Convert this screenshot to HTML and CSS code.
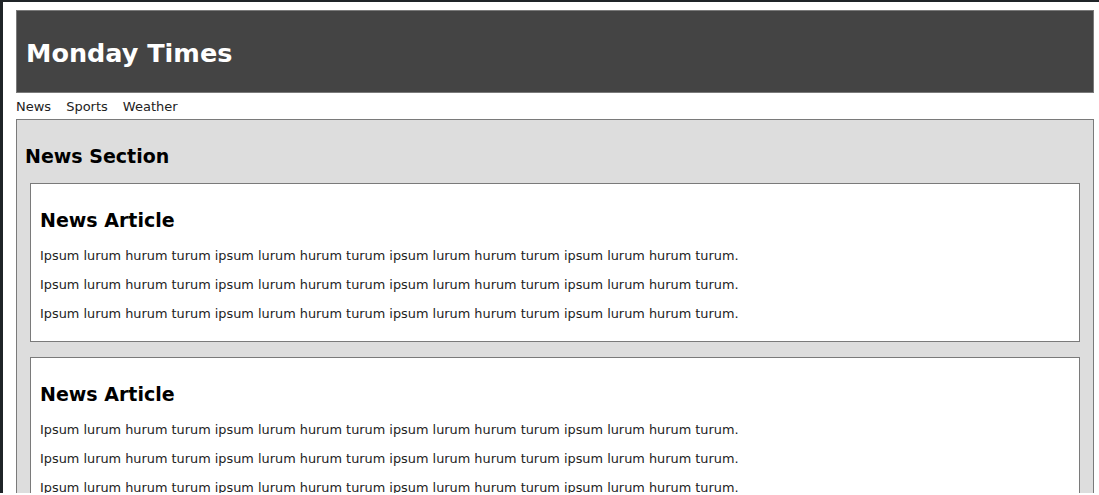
FILE: index.html
```html
<!DOCTYPE html>
<html>
<head>
<meta charset="utf-8">
<link rel="stylesheet" href="styles.css">
</head>
<body>
<div class="page">
  <header class="masthead">
    <h1 class="title">Monday Times</h1>
  </header>
  <nav class="nav">
    <a href="#">News</a>
    <a href="#">Sports</a>
    <a href="#">Weather</a>
  </nav>
  <section class="section">
    <h2 class="section-title">News Section</h2>
    <article class="article">
      <h2 class="article-title">News Article</h2>
      <p>Ipsum lurum hurum turum ipsum lurum hurum turum ipsum lurum hurum turum ipsum lurum hurum turum.</p>
      <p>Ipsum lurum hurum turum ipsum lurum hurum turum ipsum lurum hurum turum ipsum lurum hurum turum.</p>
      <p>Ipsum lurum hurum turum ipsum lurum hurum turum ipsum lurum hurum turum ipsum lurum hurum turum.</p>
    </article>
    <article class="article">
      <h2 class="article-title">News Article</h2>
      <p>Ipsum lurum hurum turum ipsum lurum hurum turum ipsum lurum hurum turum ipsum lurum hurum turum.</p>
      <p>Ipsum lurum hurum turum ipsum lurum hurum turum ipsum lurum hurum turum ipsum lurum hurum turum.</p>
      <p>Ipsum lurum hurum turum ipsum lurum hurum turum ipsum lurum hurum turum ipsum lurum hurum turum.</p>
    </article>
  </section>
</div>
</body>
</html>
```

FILE: styles.css
```css
html, body {
  margin: 0;
  padding: 0;
  background: #ffffff;
}
body {
  border-top: 2px solid #1f2428;
  border-left: 3px solid #1f2428;
  font-family: "DejaVu Sans", Verdana, sans-serif;
  color: #111;
  overflow: hidden;
  height: 493px;
  box-sizing: border-box;
}
.page {
  margin: 8px 5px 0 13px;
}
.masthead {
  background: #444444;
  border: 1px solid #7a7a7a;
  padding: 26px 9px 22px 9px;
}
.title {
  margin: 0;
  font-size: 25.5px;
  line-height: 33px;
  font-weight: bold;
  color: #ffffff;
}
.nav {
  display: flex;
  gap: 15px;
  height: 26px;
  line-height: 28px;
  font-size: 13px;
}
.nav a {
  color: #222;
  text-decoration: none;
}
.section {
  background: #dddddd;
  border: 1px solid #7a7a7a;
  padding: 24px 13px 20px 13px;
}
.section-title {
  margin: 0 0 15px -5px;
  font-size: 19px;
  line-height: 24px;
  font-weight: bold;
  color: #000;
}
.article {
  background: #ffffff;
  border: 1px solid #7a7a7a;
  padding: 24px 9px 18px 9px;
  margin-bottom: 15px;
}
.article-title {
  margin: 0 0 15px 0;
  font-size: 19px;
  line-height: 24px;
  font-weight: bold;
  color: #000;
}
.article p {
  margin: 0 0 11px 0;
  font-size: 12.87px;
  line-height: 18px;
  color: #222;
}
.article p:last-child {
  margin-bottom: 0;
}
```
